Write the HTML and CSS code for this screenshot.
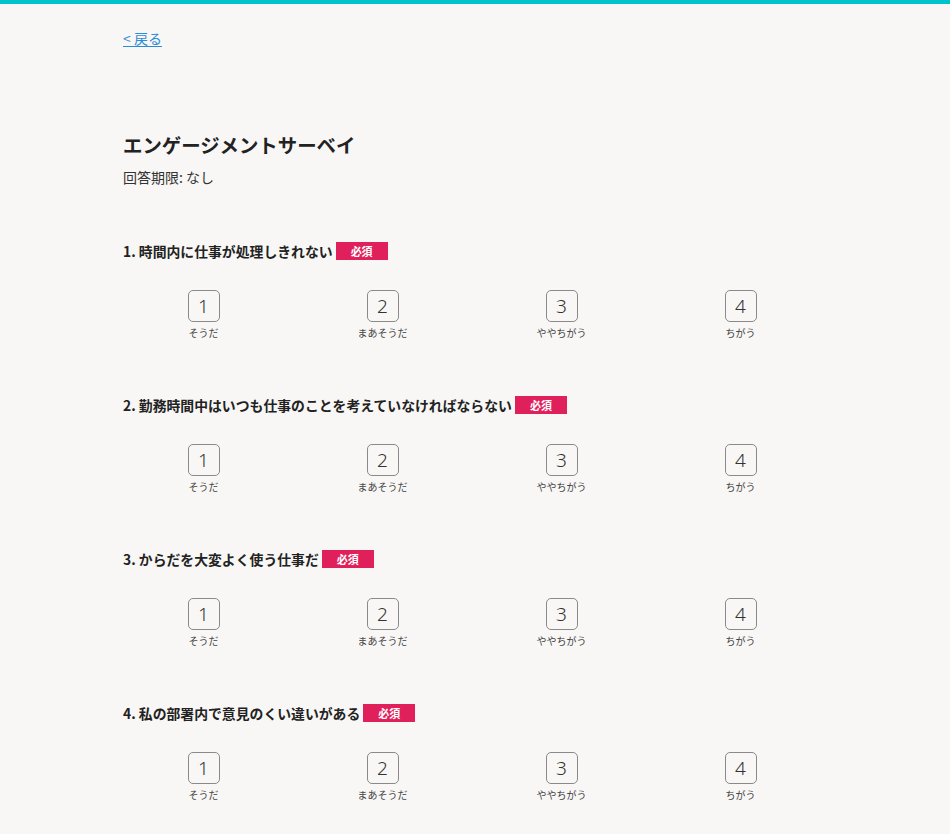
FILE: index.html
```html
<!DOCTYPE html>
<html lang="ja">
<head>
<meta charset="utf-8">
<title>エンゲージメントサーベイ</title>
<link rel="stylesheet" href="styles.css">
</head>
<body>
<div class="topbar"></div>
<main class="page">
  <a class="back" href="#">&lt; 戻る</a>
  <h1 class="title">エンゲージメントサーベイ</h1>
  <p class="deadline">回答期限: なし</p>

  <section class="question">
    <h2 class="q-title">1. 時間内に仕事が処理しきれない<span class="badge">必須</span></h2>
    <div class="options">
      <div class="opt"><span class="box">1</span><span class="label">そうだ</span></div>
      <div class="opt"><span class="box">2</span><span class="label">まあそうだ</span></div>
      <div class="opt"><span class="box">3</span><span class="label">ややちがう</span></div>
      <div class="opt"><span class="box">4</span><span class="label">ちがう</span></div>
    </div>
  </section>

  <section class="question">
    <h2 class="q-title">2. 勤務時間中はいつも仕事のことを考えていなければならない<span class="badge">必須</span></h2>
    <div class="options">
      <div class="opt"><span class="box">1</span><span class="label">そうだ</span></div>
      <div class="opt"><span class="box">2</span><span class="label">まあそうだ</span></div>
      <div class="opt"><span class="box">3</span><span class="label">ややちがう</span></div>
      <div class="opt"><span class="box">4</span><span class="label">ちがう</span></div>
    </div>
  </section>

  <section class="question">
    <h2 class="q-title">3. からだを大変よく使う仕事だ<span class="badge">必須</span></h2>
    <div class="options">
      <div class="opt"><span class="box">1</span><span class="label">そうだ</span></div>
      <div class="opt"><span class="box">2</span><span class="label">まあそうだ</span></div>
      <div class="opt"><span class="box">3</span><span class="label">ややちがう</span></div>
      <div class="opt"><span class="box">4</span><span class="label">ちがう</span></div>
    </div>
  </section>

  <section class="question">
    <h2 class="q-title">4. 私の部署内で意見のくい違いがある<span class="badge">必須</span></h2>
    <div class="options">
      <div class="opt"><span class="box">1</span><span class="label">そうだ</span></div>
      <div class="opt"><span class="box">2</span><span class="label">まあそうだ</span></div>
      <div class="opt"><span class="box">3</span><span class="label">ややちがう</span></div>
      <div class="opt"><span class="box">4</span><span class="label">ちがう</span></div>
    </div>
  </section>
</main>
</body>
</html>
```
FILE: styles.css
```css
* { box-sizing: border-box; }
html, body {
  margin: 0;
  padding: 0;
  background: #f8f7f5;
  font-family: "Noto Sans CJK JP", "Noto Sans", sans-serif;
  color: #222;
}
.topbar {
  height: 4px;
  background: #00c3cc;
}
.page {
  width: 704px;
  margin-left: 123px;
  padding-top: 21px;
}
.back {
  display: inline-block;
  font-size: 14px;
  line-height: 20px;
  color: #2a8bd6;
  text-decoration: underline;
  text-underline-offset: 2px;
}
.title {
  margin: 82px 0 0;
  font-size: 19.4px;
  line-height: 28px;
  font-weight: 700;
  color: #222;
}
.deadline {
  margin: 8px 0 0;
  font-size: 14px;
  line-height: 20px;
  color: #333;
}
.question {
  margin-top: 54px;
}
.question + .question {
  margin-top: 55px;
}
.q-title {
  margin: 0;
  display: flex;
  align-items: center;
  font-size: 13.85px;
  line-height: 20px;
  font-weight: 700;
  color: #222;
}
.badge {
  display: inline-flex;
  align-items: center;
  justify-content: center;
  width: 52px;
  height: 18px;
  margin-left: 3px;
  background: #e0205b;
  color: #fff;
  font-size: 11px;
  font-weight: 700;
}
.options {
  display: grid;
  grid-template-columns: repeat(4, 179px);
  margin-left: -9px;
  margin-top: 29px;
}
.opt {
  display: flex;
  flex-direction: column;
  align-items: center;
}
.box {
  width: 32px;
  height: 32px;
  border: 1px solid #8a8a8a;
  border-radius: 5px;
  display: flex;
  align-items: center;
  justify-content: center;
  font-family: "Noto Sans", "Noto Sans CJK JP", sans-serif;
  font-size: 19px;
  font-weight: 300;
  color: #333;
  background: #f8f7f5;
}
.label {
  margin-top: 4px;
  font-size: 10px;
  line-height: 14px;
  color: #444;
}
```
